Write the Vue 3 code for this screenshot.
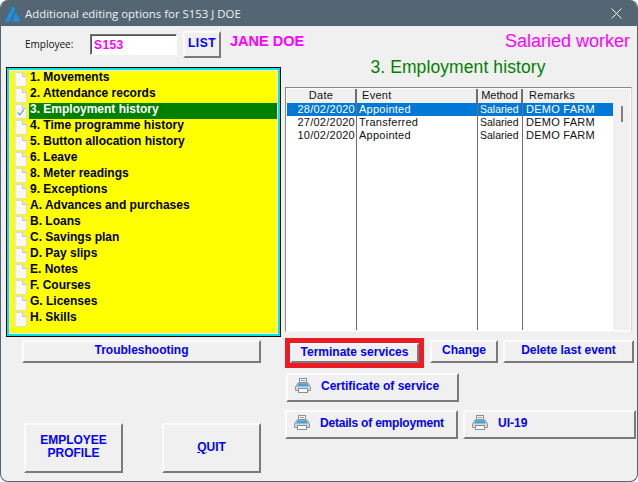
<script setup>
const menu = [
  "1. Movements",
  "2. Attendance records",
  "3. Employment history",
  "4. Time programme history",
  "5. Button allocation history",
  "6. Leave",
  "8. Meter readings",
  "9. Exceptions",
  "A. Advances and purchases",
  "B. Loans",
  "C. Savings plan",
  "D. Pay slips",
  "E. Notes",
  "F. Courses",
  "G. Licenses",
  "H. Skills",
];
const selected = 2;

const events = [
  { date: "28/02/2020", event: "Appointed", method: "Salaried", remarks: "DEMO FARM" },
  { date: "27/02/2020", event: "Transferred", method: "Salaried", remarks: "DEMO FARM" },
  { date: "10/02/2020", event: "Appointed", method: "Salaried", remarks: "DEMO FARM" },
];
</script>

<template>
  <div class="window">
    <div class="titlebar">
      <svg class="logo" width="16" height="15" viewBox="0 0 16 15">
        <path d="M7 0 H9.5 L10.5 2 L4.5 14.5 H0 Z" fill="#1a8fe6" />
        <path d="M10.8 5 L15.5 14.5 H5.5 L9.5 11.5 L8.6 9.5 Z" fill="#1a8fe6" />
      </svg>
      <span class="title">Additional editing options for S153 J DOE</span>
      <svg class="close" width="11" height="11" viewBox="0 0 11 11">
        <path d="M0.5 0.5 L10.5 10.5 M10.5 0.5 L0.5 10.5" stroke="#f2f4f5" stroke-width="1" fill="none" />
      </svg>
    </div>

    <div class="body">
      <div class="top">
        <span class="emp-label">Employee:</span>
        <div class="emp-input">S153</div>
        <button class="btn list-btn">LIST</button>
        <span class="emp-name">JANE DOE</span>
        <span class="worker">Salaried worker</span>
      </div>

      <div class="columns">
        <div class="left">
          <div class="menu-frame">
            <ul class="menu">
              <li v-for="(item, i) in menu" :key="item" class="menu-row">
                <svg class="page" width="13" height="15" viewBox="0 0 13 15">
                  <path d="M1 0.5 H8.5 L12.5 4.5 V14.5 H1 Z" fill="#f8f8f8" stroke="#dcdcc8" />
                  <path d="M8.5 0.5 V4.5 H12.5" fill="#e4e4e4" stroke="#c8c8b8" />
                  <path v-if="i === selected" d="M3.5 8.5 L5.8 11 L10 5.5" fill="none" stroke="#7da7d9" stroke-width="1.4" />
                </svg>
                <span class="menu-text" :class="{ on: i === selected }">{{ item }}</span>
              </li>
            </ul>
          </div>
          <button class="btn trouble">Troubleshooting</button>
          <div class="big-row">
            <button class="btn big">EMPLOYEE<br />PROFILE</button>
            <button class="btn big"><u>Q</u>UIT</button>
          </div>
        </div>

        <div class="right">
          <h1 class="heading">3. Employment history</h1>
          <div class="table-box">
            <div class="table-inner">
              <div class="grid head">
                <span class="th center">Date</span>
                <span class="th">Event</span>
                <span class="th center">Method</span>
                <span class="th">Remarks</span>
              </div>
              <div class="rows">
                <div v-for="(r, i) in events" :key="r.date" class="grid row" :class="{ active: i === 0 }">
                  <span class="td date">{{ r.date }}</span>
                  <span class="td">{{ r.event }}</span>
                  <span class="td method">{{ r.method }}</span>
                  <span class="td">{{ r.remarks }}</span>
                </div>
                <div class="grid filler">
                  <span></span><span></span><span></span><span></span>
                </div>
              </div>
            </div>
            <div class="scroll"><div class="thumb"></div></div>
          </div>

          <div class="action-row">
            <div class="red-box"><button class="btn terminate">Terminate services</button></div>
            <button class="btn change">Change</button>
            <button class="btn delete">Delete last event</button>
          </div>

          <button class="btn print cert">
            <svg class="printer" width="16" height="15" viewBox="0 0 16 15">
              <rect x="4.5" y="0.5" width="7" height="4" fill="#f6f6f6" stroke="#8a8f94" />
              <rect x="6" y="2" width="4" height="1" fill="#9a9a9a" />
              <path d="M3 5 H13 L15.5 9 V12.5 H0.5 V9 Z" fill="#d4d8db" stroke="#8e969c" />
              <path d="M3.5 5.5 H12.5 L14 8.5 H2 Z" fill="#4aa3d8" />
              <rect x="3.5" y="10.5" width="9" height="4" fill="#fafafa" stroke="#8a8f94" />
            </svg>
            Certificate of service
          </button>

          <div class="print-row">
            <button class="btn print details">
              <svg class="printer" width="16" height="15" viewBox="0 0 16 15">
                <rect x="4.5" y="0.5" width="7" height="4" fill="#f6f6f6" stroke="#8a8f94" />
                <rect x="6" y="2" width="4" height="1" fill="#9a9a9a" />
                <path d="M3 5 H13 L15.5 9 V12.5 H0.5 V9 Z" fill="#d4d8db" stroke="#8e969c" />
                <path d="M3.5 5.5 H12.5 L14 8.5 H2 Z" fill="#4aa3d8" />
                <rect x="3.5" y="10.5" width="9" height="4" fill="#fafafa" stroke="#8a8f94" />
              </svg>
              Details of employment
            </button>
            <button class="btn print ui19">
              <svg class="printer" width="16" height="15" viewBox="0 0 16 15">
                <rect x="4.5" y="0.5" width="7" height="4" fill="#f6f6f6" stroke="#8a8f94" />
                <rect x="6" y="2" width="4" height="1" fill="#9a9a9a" />
                <path d="M3 5 H13 L15.5 9 V12.5 H0.5 V9 Z" fill="#d4d8db" stroke="#8e969c" />
                <path d="M3.5 5.5 H12.5 L14 8.5 H2 Z" fill="#4aa3d8" />
                <rect x="3.5" y="10.5" width="9" height="4" fill="#fafafa" stroke="#8a8f94" />
              </svg>
              UI-19
            </button>
          </div>
        </div>
      </div>
    </div>
  </div>
</template>

<style>
html,
body {
  background: #ffffff;
  overflow: hidden;
}
</style>

<style scoped>
.window {
  width: 638px;
  height: 482px;
  box-sizing: border-box;
  background: #f0f0f0;
  border: 1px solid #546673;
  border-top: 0;
  border-radius: 8px;
  overflow: hidden;
  font-family: "Liberation Sans", Arial, sans-serif;
  font-size: 11px;
}

.titlebar {
  height: 26px;
  background: #546673;
  color: #eef1f3;
  display: flex;
  align-items: center;
  padding: 0 15px 0 4px;
  font-family: "Open Sans", "Liberation Sans", sans-serif;
  font-size: 11.4px;
}

.logo {
  margin: 2px 4px 0 0;
}

.title {
  flex: 1;
}

.body {
  padding-left: 5px;
}

.top {
  height: 32px;
  display: flex;
  align-items: center;
  padding-top: 2px;
}

.emp-label {
  margin-left: 19px;
  width: 65px;
  font-family: "Open Sans", "Liberation Sans", sans-serif;
  font-size: 10px;
  color: #111;
}

.emp-input {
  width: 87px;
  height: 21px;
  box-sizing: border-box;
  background: #fff;
  border: 1px solid;
  border-color: #777 #fff #fff #777;
  box-shadow: inset 1px 1px 0 #555;
  padding: 3px 0 0 3px;
  color: #ff00ff;
  font-weight: 700;
  font-size: 12px;
  letter-spacing: 0.4px;
}

.emp-name {
  margin-left: 9px;
  margin-top: -6px;
  color: #ff00ff;
  font-size: 14.5px;
  font-weight: 700;
  flex: 1;
}

.worker {
  color: #ff00ff;
  font-size: 18px;
  margin-right: 7px;
  margin-top: -5px;
}

.btn {
  display: block;
  box-sizing: border-box;
  margin: 0;
  padding: 0 0 4px;
  background: #f0f0f0;
  border: 2px solid;
  border-color: #fbfbfb #7a7a7a #7a7a7a #fbfbfb;
  color: #0000ff;
  font-family: "Liberation Sans", Arial, sans-serif;
  font-weight: 700;
  font-size: 12px;
}

.list-btn {
  width: 38px;
  height: 27px;
  margin-left: 6px;
  padding-bottom: 2px;
  letter-spacing: 0.5px;
}

.columns {
  display: flex;
}

.left {
  width: 275px;
  margin-top: 7px;
}

.menu-frame {
  height: 270px;
  box-sizing: border-box;
  border: 1px solid #000;
  background: #ffff00;
  box-shadow: inset 0 0 0 2px #00e6e6, inset 0 0 0 3px #f4f4f4;
  padding: 3px 0 0 7px;
}

.menu {
  list-style: none;
  margin: 0;
  padding: 0;
}

.menu-row {
  height: 16px;
  display: flex;
  align-items: center;
}

.page {
  flex: none;
  margin-right: 2px;
}

.menu-text {
  flex: 1;
  height: 16px;
  line-height: 13px;
  margin-right: 3px;
  padding-left: 1px;
  font-weight: 700;
  font-size: 12px;
  color: #000;
  white-space: nowrap;
}

.menu-text.on {
  background: #008000;
  color: #fff;
}

.trouble {
  width: 239px;
  height: 23px;
  margin: 3px 0 0 16px;
}

.big-row {
  display: flex;
  gap: 39px;
  margin: 60px 0 0 18px;
}

.big {
  width: 99px;
  height: 50px;
  line-height: 13px;
  padding-bottom: 2px;
}

.right {
  width: 351px;
  margin-left: 4px;
}

.heading {
  margin: 0;
  height: 27px;
  line-height: 14px;
  text-align: center;
  color: #008000;
  font-size: 17.5px;
  font-weight: 400;
  letter-spacing: 0.1px;
  padding-right: 5px;
}

.table-box {
  width: 347px;
  height: 245px;
  box-sizing: border-box;
  background: #fff;
  border: 1px solid;
  border-color: #888 #d8d8d8 #f8f8f8 #888;
  padding: 1px;
  display: flex;
}

.table-inner {
  width: 326px;
  display: flex;
  flex-direction: column;
}

.grid {
  display: grid;
  grid-template-columns: 70px 121px 45px 90px;
}

.head {
  height: 14px;
}

.th {
  box-sizing: border-box;
  background: #f0f0f0;
  border-right: 2px solid #6f6f6f;
  padding-left: 5px;
  line-height: 12px;
  color: #111;
  letter-spacing: 0.3px;
}

.th:last-child {
  border-right: 0;
  padding-left: 6px;
}

.th.center:nth-child(3) {
  letter-spacing: 0;
}

.center {
  text-align: center;
  padding-left: 0;
}

.rows {
  flex: 1;
  display: flex;
  flex-direction: column;
}

.row {
  height: 13px;
  flex: none;
}

.row.active {
  background: #0078d7;
  color: #fff;
}

.row:not(.active) {
  color: #111;
}

.td {
  box-sizing: border-box;
  border-right: 1px solid #6f6f6f;
  padding-left: 2px;
  line-height: 12px;
  letter-spacing: 0.25px;
  white-space: nowrap;
  overflow: hidden;
}

.td:last-child {
  border-right: 0;
  padding-left: 3px;
}

.method {
  letter-spacing: 0;
  font-size: 10.5px;
}

.date {
  text-align: right;
  padding: 0 1px 0 0;
}

.filler {
  flex: 1;
}

.filler span {
  border-right: 1px solid #6f6f6f;
}

.filler span:last-child {
  border-right: 0;
}

.scroll {
  flex: 1;
  background: #f0f0f0;
  padding: 17px 0 0 8px;
}

.thumb {
  width: 2px;
  height: 16px;
  background: #808080;
}

.action-row {
  display: flex;
  align-items: flex-start;
  margin-top: 8px;
}

.red-box {
  width: 139px;
  height: 30px;
  box-sizing: border-box;
  border: 5px solid #ed1c24;
  margin-top: -2px;
}

.terminate {
  width: 100%;
  height: 100%;
}

.change {
  width: 68px;
  height: 23px;
  margin-left: 6px;
}

.delete {
  width: 131px;
  height: 23px;
  margin-left: 5px;
}

.print {
  height: 29px;
  display: flex;
  align-items: center;
}

.printer {
  flex: none;
  margin: 0 10px 0 7px;
}

.cert {
  width: 173px;
  margin: 5px 0 0 1px;
}

.print-row {
  display: flex;
  gap: 5px;
  margin-top: 8px;
}

.details {
  width: 173px;
  letter-spacing: -0.2px;
}

.ui19 {
  width: 173px;
}
</style>
